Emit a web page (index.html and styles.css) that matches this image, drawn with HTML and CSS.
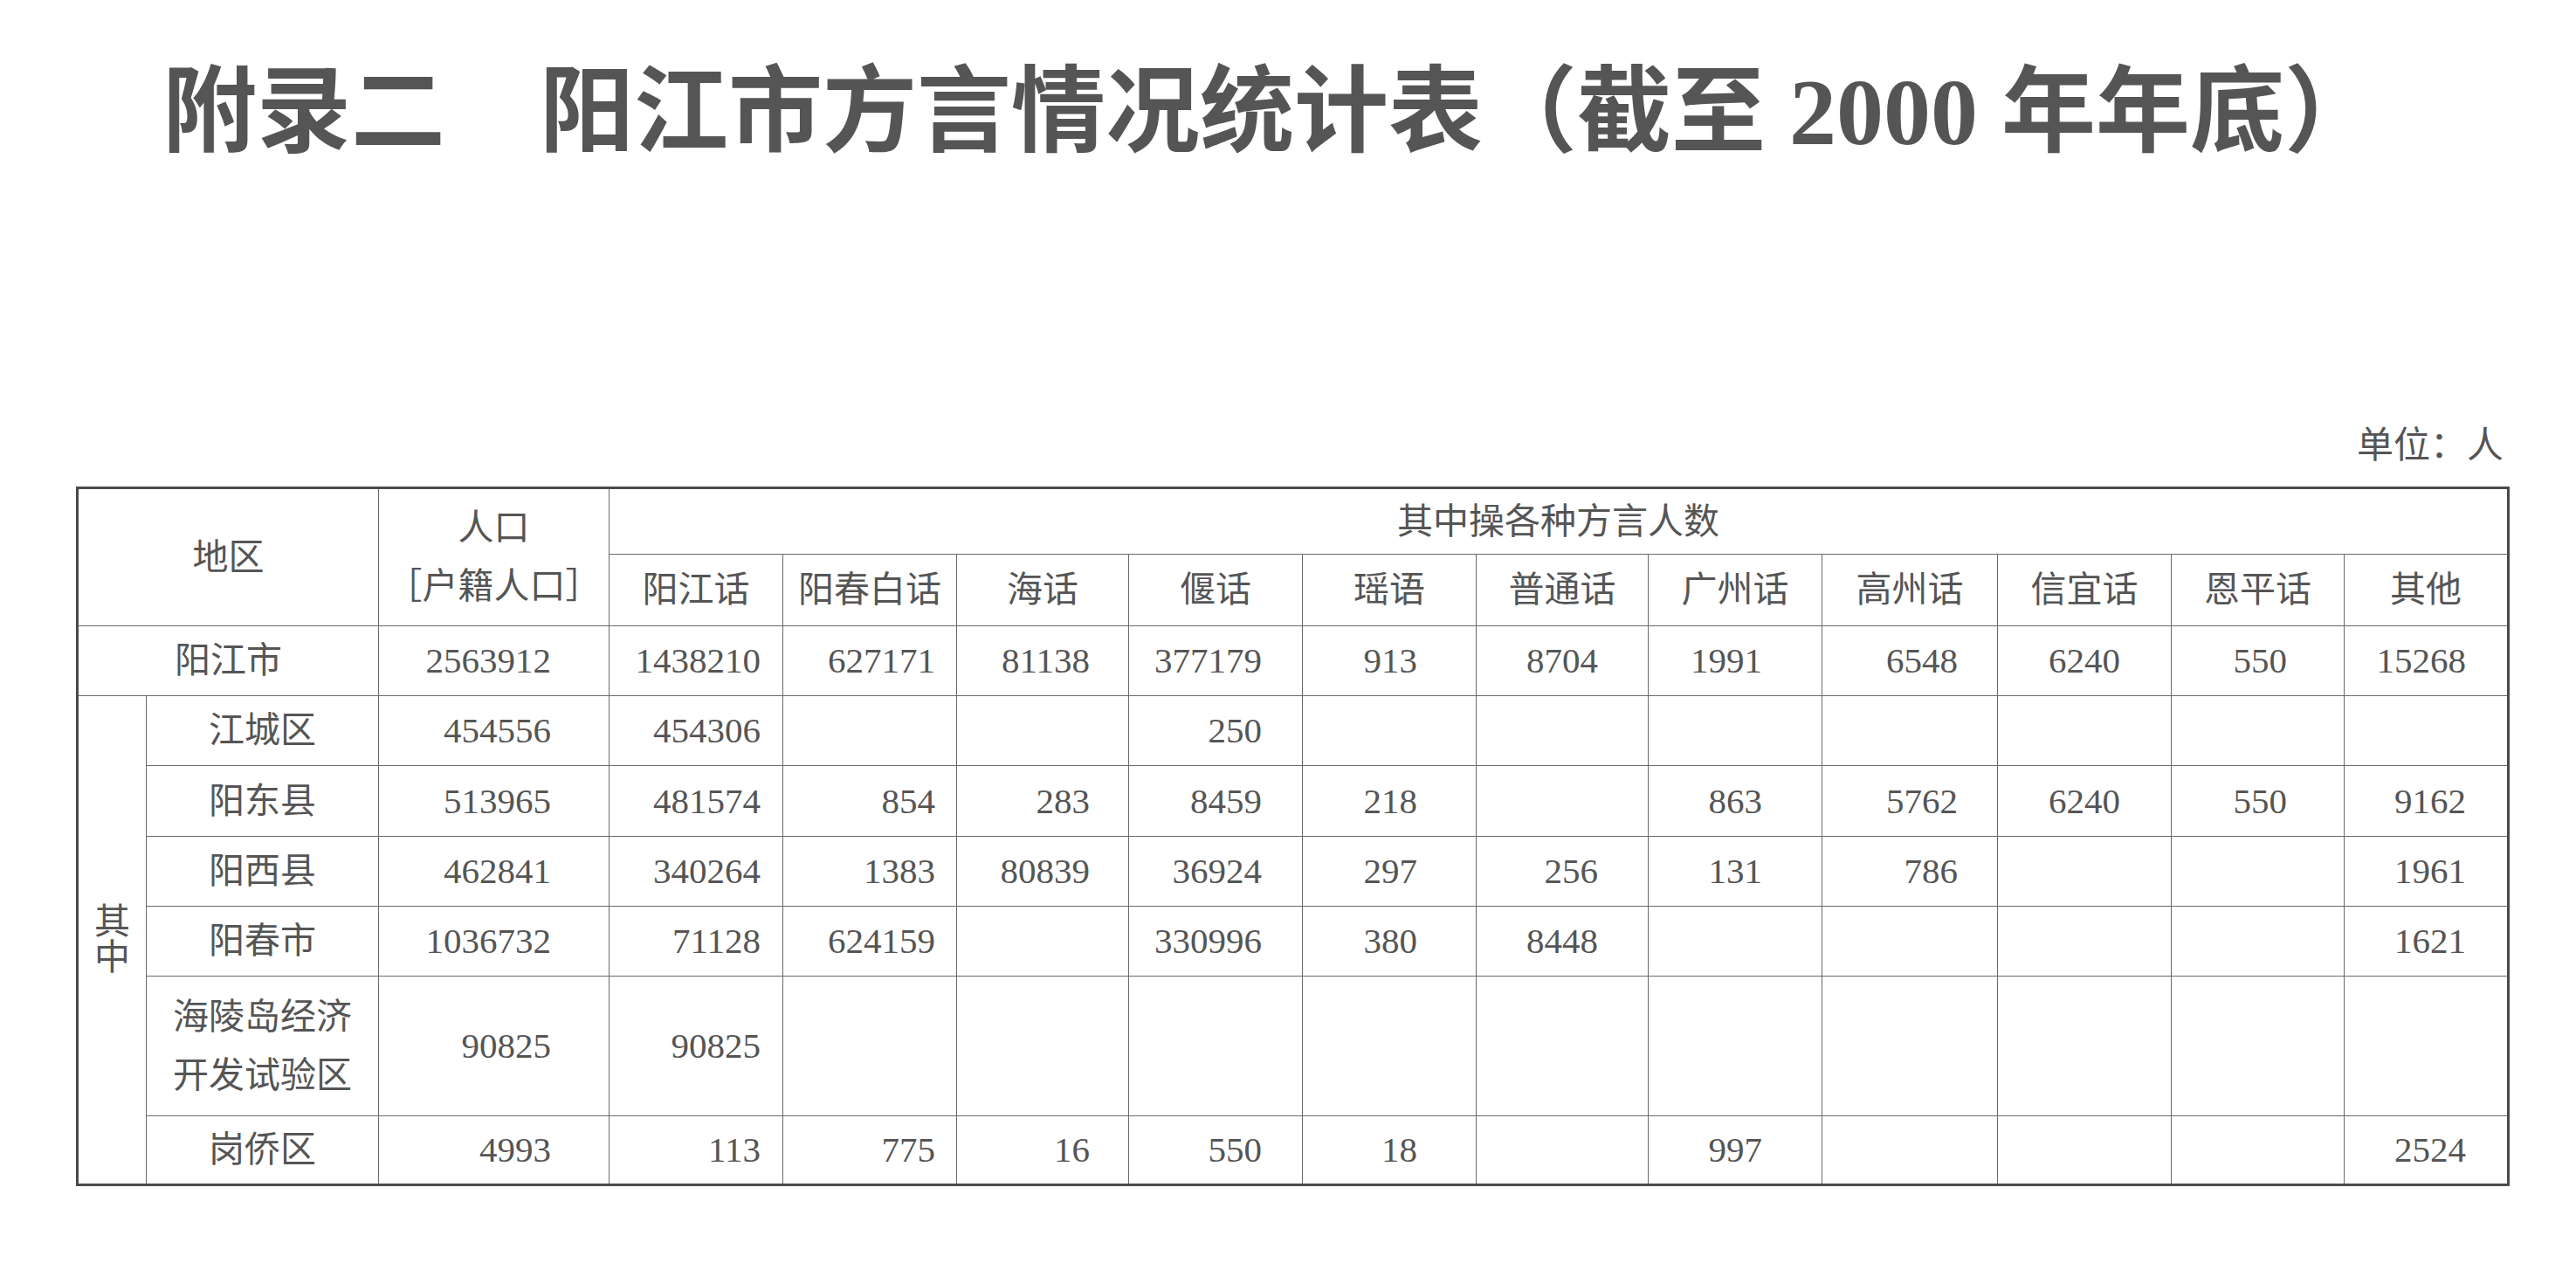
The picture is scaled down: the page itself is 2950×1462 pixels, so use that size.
FILE: index.html
```html
<!DOCTYPE html>
<html lang="zh-CN">
<head>
<meta charset="utf-8">
<title>附录二　阳江市方言情况统计表</title>
<link rel="stylesheet" href="styles.css">
</head>
<body>
<div class="page">
  <h1 class="title">附录二　阳江市方言情况统计表（截至 2000 年年底）</h1>
  <div class="unit">单位：人</div>
  <table class="stats">
    <colgroup>
      <col class="w-q"><col class="w-name"><col class="w-pop">
      <col class="w-d"><col class="w-d"><col class="w-d3"><col class="w-d"><col class="w-d"><col class="w-d3">
      <col class="w-d"><col class="w-d10"><col class="w-d"><col class="w-d12"><col class="w-last">
    </colgroup>
    <thead>
      <tr class="h1">
        <th colspan="2" rowspan="2">地区</th>
        <th rowspan="2" class="pophead"><span class="l">人口</span><span class="l">［户籍人口］</span></th>
        <th colspan="11">其中操各种方言人数</th>
      </tr>
      <tr class="h2">
        <th>阳江话</th><th>阳春白话</th><th>海话</th><th>偃话</th><th>瑶语</th><th>普通话</th><th>广州话</th><th>高州话</th><th>信宜话</th><th>恩平话</th><th>其他</th>
      </tr>
    </thead>
    <tbody>
      <tr class="r80">
        <td colspan="2" class="name">阳江市</td>
        <td class="pop">2563912</td><td class="yj">1438210</td><td class="ycb">627171</td><td class="hai">81138</td><td class="nian">377179</td><td class="yao">913</td><td class="pth">8704</td><td class="gz">1991</td><td class="gzh">6548</td><td class="xy">6240</td><td class="ep">550</td><td class="qt">15268</td>
      </tr>
      <tr class="r80">
        <td rowspan="6" class="qz"><span class="v">其</span><span class="v">中</span></td>
        <td class="name">江城区</td>
        <td class="pop">454556</td><td class="yj">454306</td><td class="ycb"></td><td class="hai"></td><td class="nian">250</td><td class="yao"></td><td class="pth"></td><td class="gz"></td><td class="gzh"></td><td class="xy"></td><td class="ep"></td><td class="qt"></td>
      </tr>
      <tr class="r81">
        <td class="name">阳东县</td>
        <td class="pop">513965</td><td class="yj">481574</td><td class="ycb">854</td><td class="hai">283</td><td class="nian">8459</td><td class="yao">218</td><td class="pth"></td><td class="gz">863</td><td class="gzh">5762</td><td class="xy">6240</td><td class="ep">550</td><td class="qt">9162</td>
      </tr>
      <tr class="r80">
        <td class="name">阳西县</td>
        <td class="pop">462841</td><td class="yj">340264</td><td class="ycb">1383</td><td class="hai">80839</td><td class="nian">36924</td><td class="yao">297</td><td class="pth">256</td><td class="gz">131</td><td class="gzh">786</td><td class="xy"></td><td class="ep"></td><td class="qt">1961</td>
      </tr>
      <tr class="r80">
        <td class="name">阳春市</td>
        <td class="pop">1036732</td><td class="yj">71128</td><td class="ycb">624159</td><td class="hai"></td><td class="nian">330996</td><td class="yao">380</td><td class="pth">8448</td><td class="gz"></td><td class="gzh"></td><td class="xy"></td><td class="ep"></td><td class="qt">1621</td>
      </tr>
      <tr class="r160">
        <td class="name two"><span class="l">海陵岛经济</span><span class="l">开发试验区</span></td>
        <td class="pop">90825</td><td class="yj">90825</td><td class="ycb"></td><td class="hai"></td><td class="nian"></td><td class="yao"></td><td class="pth"></td><td class="gz"></td><td class="gzh"></td><td class="xy"></td><td class="ep"></td><td class="qt"></td>
      </tr>
      <tr class="r79">
        <td class="name">岗侨区</td>
        <td class="pop">4993</td><td class="yj">113</td><td class="ycb">775</td><td class="hai">16</td><td class="nian">550</td><td class="yao">18</td><td class="pth"></td><td class="gz">997</td><td class="gzh"></td><td class="xy"></td><td class="ep"></td><td class="qt">2524</td>
      </tr>
    </tbody>
  </table>
</div>
</body>
</html>
```

FILE: styles.css
```css
html, body {
  margin: 0;
  padding: 0;
  background: #ffffff;
}

.page {
  width: 2784px;
  padding: 75px 0 0 87px;
  font-family: "Liberation Serif", "Noto Sans CJK SC", serif;
  color: #555555;
}

.title {
  margin: 0 0 0 99px;
  font-size: 108px;
  line-height: 108px;
  height: 108px;
  font-weight: 700;
  color: #555555;
  letter-spacing: 0;
  white-space: nowrap;
}

.unit {
  margin-top: 306px;
  height: 42px;
  font-size: 42px;
  line-height: 42px;
  text-align: right;
  padding-right: 4px;
  color: #555555;
}

.stats {
  margin-top: 26px;
  width: 2784px;
  table-layout: fixed;
  border-collapse: collapse;
  border: 3px solid #4a4a4a;
  font-size: 41px;
  line-height: 41px;
  color: #555555;
}

.w-q { width: 79px; }
.w-name { width: 266px; }
.w-pop { width: 264px; }
.w-d { width: 199px; }
.w-d3 { width: 197px; }
.w-d10 { width: 201px; }
.w-d12 { width: 198px; }
.w-last { width: 188px; }

.stats th,
.stats td {
  border: 1.5px solid #6a6a6a;
  padding: 0;
  font-weight: 400;
  text-align: center;
  vertical-align: middle;
  white-space: nowrap;
}

.h1 { height: 76px; }
.h2 { height: 82px; }
.r79 { height: 79px; }
.r80 { height: 80px; }
.r81 { height: 81px; }
.r160 { height: 160px; }

.stats .l {
  display: block;
  line-height: 67px;
}

.stats .v {
  display: block;
  line-height: 41px;
}

.stats td.pop { text-align: right; padding-right: 66px; }
.stats td.yj { text-align: right; padding-right: 25px; }
.stats td.ycb { text-align: right; padding-right: 24px; }
.stats td.hai { text-align: right; padding-right: 44px; }
.stats td.nian { text-align: right; padding-right: 46px; }
.stats td.yao { text-align: right; padding-right: 67px; }
.stats td.pth { text-align: right; padding-right: 57px; }
.stats td.gz { text-align: right; padding-right: 68px; }
.stats td.gzh { text-align: right; padding-right: 45px; }
.stats td.xy { text-align: right; padding-right: 58px; }
.stats td.ep { text-align: right; padding-right: 65px; }
.stats td.qt { text-align: right; padding-right: 47px; }
```
